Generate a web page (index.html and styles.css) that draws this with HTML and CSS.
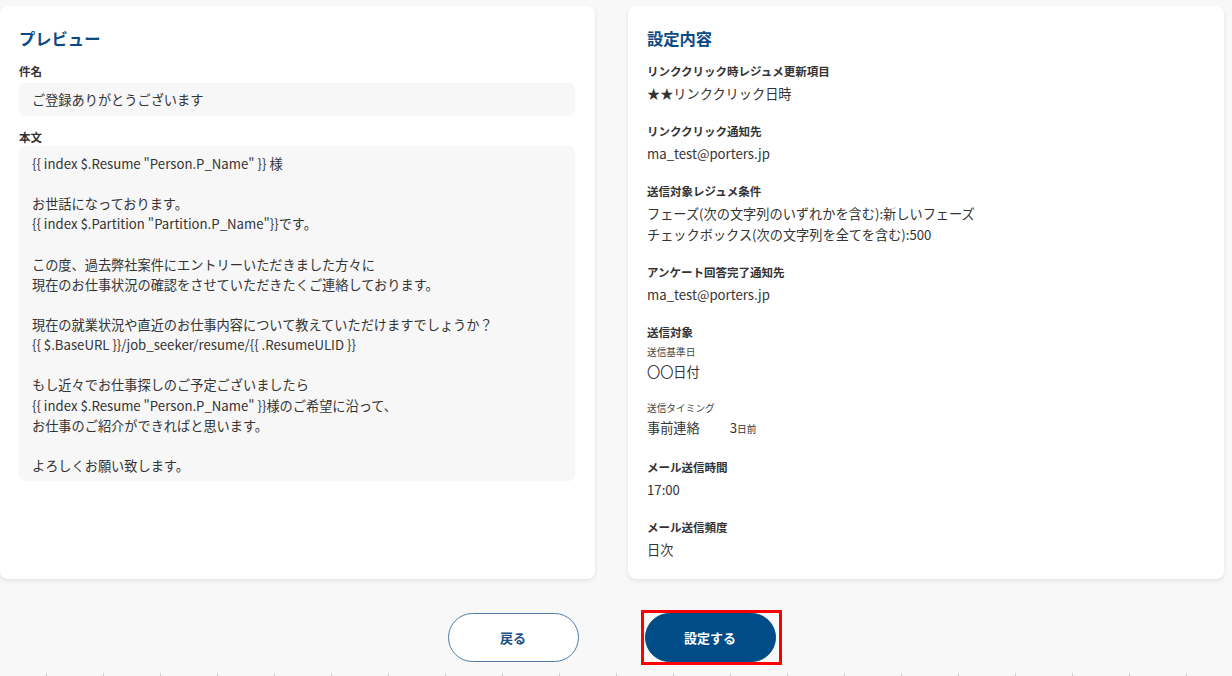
FILE: index.html
```html
<!DOCTYPE html>
<html lang="ja">
<head>
<meta charset="utf-8">
<title>設定内容の確認</title>
<link rel="stylesheet" href="styles.css">
</head>
<body>
<div class="page">
  <div class="cards">
    <section class="card">
      <h2 class="card-title">プレビュー</h2>
      <div class="field-label subject-label">件名</div>
      <div class="box subject">ご登録ありがとうございます</div>
      <div class="field-label body-label">本文</div>
      <div class="box body-text">{{ index $.Resume "Person.P_Name" }} 様<br><br>お世話になっております。<br>{{ index $.Partition "Partition.P_Name"}}です。<br><br>この度、過去弊社案件にエントリーいただきました方々に<br>現在のお仕事状況の確認をさせていただきたくご連絡しております。<br><br>現在の就業状況や直近のお仕事内容について教えていただけますでしょうか？<br>{{ $.BaseURL }}/job_seeker/resume/{{ .ResumeULID }}<br><br>もし近々でお仕事探しのご予定ございましたら<br>{{ index $.Resume "Person.P_Name" }}様のご希望に沿って、<br>お仕事のご紹介ができればと思います。<br><br>よろしくお願い致します。</div>
    </section>
    <section class="card">
      <h2 class="card-title">設定内容</h2>
      <div class="group">
        <div class="field-label">リンククリック時レジュメ更新項目</div>
        <div class="value">★★リンククリック日時</div>
      </div>
      <div class="group">
        <div class="field-label">リンククリック通知先</div>
        <div class="value">ma_test@porters.jp</div>
      </div>
      <div class="group">
        <div class="field-label">送信対象レジュメ条件</div>
        <div class="value">フェーズ(次の文字列のいずれかを含む):新しいフェーズ<br>チェックボックス(次の文字列を全てを含む):500</div>
      </div>
      <div class="group">
        <div class="field-label">アンケート回答完了通知先</div>
        <div class="value">ma_test@porters.jp</div>
      </div>
      <div class="group">
        <div class="field-label">送信対象</div>
        <div class="sub-label">送信基準日</div>
        <div class="value">〇〇日付</div>
        <div class="sub-label sub-second">送信タイミング</div>
        <div class="value timing"><span>事前連絡</span><span class="days">3<small>日前</small></span></div>
      </div>
      <div class="group">
        <div class="field-label">メール送信時間</div>
        <div class="value">17:00</div>
      </div>
      <div class="group last">
        <div class="field-label">メール送信頻度</div>
        <div class="value">日次</div>
      </div>
    </section>
  </div>
  <div class="actions">
    <button class="btn btn-back" type="button">戻る</button>
    <span class="highlight"><button class="btn btn-submit" type="button">設定する</button></span>
  </div>
  <div class="ruler">
    <span></span><span></span><span></span><span></span><span></span><span></span><span></span><span></span><span></span><span></span><span></span><span></span><span></span><span></span><span></span><span></span><span></span><span></span><span></span><span></span><span></span><span></span>
  </div>
</div>
</body>
</html>
```
FILE: styles.css
```css
* { box-sizing: border-box; }
html, body {
  margin: 0;
  padding: 0;
  background: #f8f8f8;
  font-family: "Noto Sans CJK JP", "Noto Sans", sans-serif;
  color: #333;
}
.page {
  width: 1232px;
  height: 676px;
  overflow: hidden;
  display: flex;
  flex-direction: column;
}
.cards {
  display: grid;
  grid-template-columns: 595px 596px;
  column-gap: 33px;
  padding-top: 6px;
}
.card {
  background: #fff;
  border-radius: 8px;
  box-shadow: 0 2px 4px rgba(0, 0, 0, 0.09);
  padding: 19px 20px 19px 19px;
  height: 573px;
}
.card-title {
  margin: 0;
  font-size: 16.3px;
  line-height: 26px;
  font-weight: 700;
  color: #0b4a85;
}
.field-label {
  font-size: 11.5px;
  line-height: 17px;
  font-weight: 700;
  color: #333;
}
.subject-label { margin-top: 12px; margin-bottom: 3px; }
.body-label { margin-top: 13px; margin-bottom: 0; }
.box {
  background: #f7f7f7;
  border-radius: 6px;
  font-size: 13.2px;
  color: #333;
  padding-left: 13px;
}
.subject {
  height: 33px;
  line-height: 33px;
}
.body-text {
  padding-top: 8px;
  padding-bottom: 5px;
  line-height: 20.13px;
}
.group { margin-top: 12px; }
.group + .group { margin-top: 19px; }
.value {
  font-size: 13.2px;
  line-height: 21px;
  margin-top: 3px;
  color: #333;
}
.sub-label {
  font-size: 9.7px;
  line-height: 14px;
  margin-top: 3.5px;
  color: #444;
}
.sub-label + .value { margin-top: 2.5px; }
.sub-label.sub-second { margin-top: 18.5px; }
.timing {
  display: flex;
  align-items: baseline;
}
.days { margin-left: 30px; }
.days small { font-size: 9.7px; }
.actions {
  display: flex;
  justify-content: center;
  align-items: center;
  column-gap: 62px;
  padding-top: 31px;
  padding-right: 3px;
}
.btn {
  width: 131px;
  height: 49px;
  border-radius: 25px;
  font-family: "Noto Sans CJK JP", "Noto Sans", sans-serif;
  font-size: 13px;
  font-weight: 700;
  cursor: pointer;
}
.btn-back {
  background: #fff;
  border: 1px solid #4f7ca8;
  color: #1c4f82;
}
.highlight {
  display: flex;
  border: 3px solid #f00;
  padding: 0 3px 0 1px;
}
.btn-submit {
  background: #004c87;
  border: 1px solid #004c87;
  color: #fff;
}
.ruler {
  margin-top: auto;
  display: flex;
  padding-left: 46px;
  height: 3px;
}
.ruler span {
  flex: 0 0 57px;
  border-left: 1px solid #cfcfcf;
}
```
